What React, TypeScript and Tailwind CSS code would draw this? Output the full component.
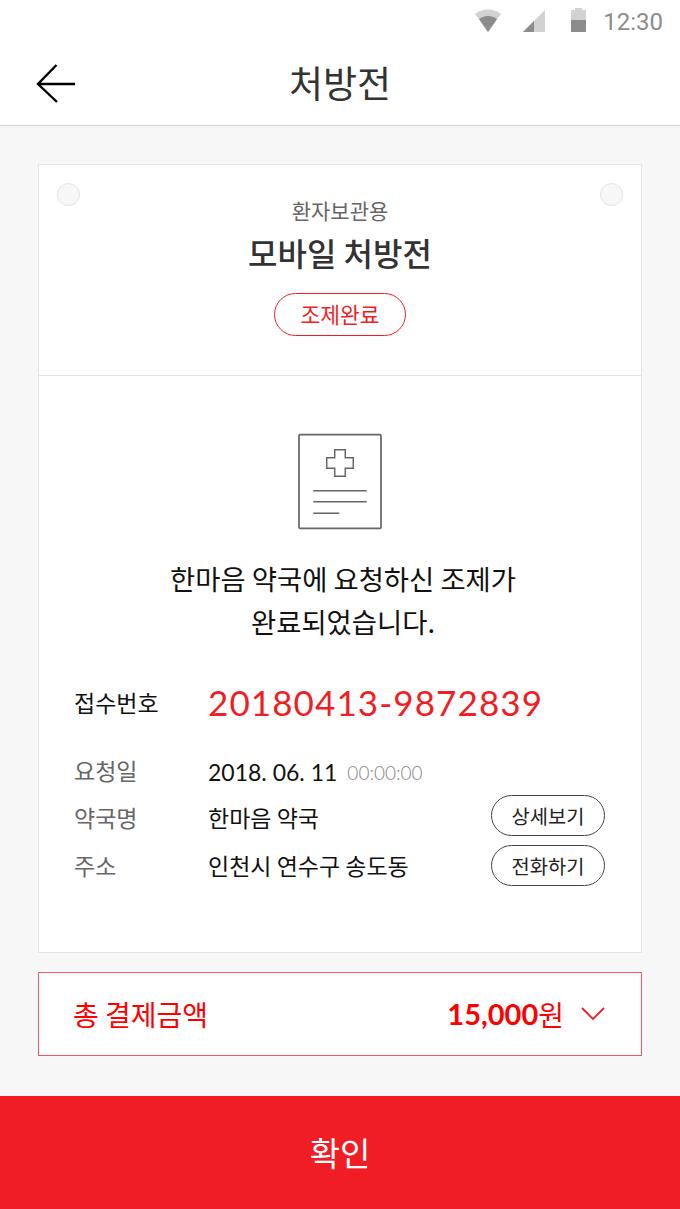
function StatusBar() {
    return (
        <div className="h-[44px] flex items-center justify-end pr-[17px] pb-[4px]">
            <svg width="28" height="24" viewBox="0 0 28 24" className="mr-[20px]">
                <path d="M1 6 C8 0 20 0 27 6 L14 24 Z" fill="#d2d2d2" />
                <path d="M5 11 C10 7 18 7 23 11 L14 24 Z" fill="#8c8c8c" />
            </svg>
            <svg width="24" height="24" viewBox="0 0 24 24" className="mr-[25px] mt-[2px]">
                <path d="M1 23 L23 1 V23 Z" fill="#d2d2d2" />
                <path d="M1 23 L12 12 V23 Z" fill="#8c8c8c" />
            </svg>
            <div className="w-[15px] h-[24px] mr-[17px] flex flex-col items-center">
                <div className="w-[7px] h-[2px] bg-[#d2d2d2]" />
                <div className="w-[15px] h-[10px] bg-[#d2d2d2]" />
                <div className="w-[15px] h-[12px] bg-[#8c8c8c]" />
            </div>
            <span className="mt-[4px] text-[24px] leading-none text-[#8c8c8c] font-['Roboto',sans-serif]">12:30</span>
        </div>
    );
}

function Header() {
    return (
        <div className="relative h-[82px] bg-white border-b border-[#cfcfcf] flex items-center justify-center">
            <button className="absolute left-[36px] top-[20px]">
                <svg width="40" height="40" viewBox="0 0 40 40" fill="none" stroke="#000" strokeWidth="2.4" className="block">
                    <path d="M39 20 H2 M20.5 1 L2 20 L21 38" />
                </svg>
            </button>
            <h1 className="text-[37px] leading-none text-[#333] mb-[4px]">처방전</h1>
        </div>
    );
}

function PrescriptionIcon() {
    return (
        <svg width="86" height="98" viewBox="0 0 86 98" fill="none" stroke="#666" strokeWidth="1.5" className="block">
            <rect x="2" y="2.7" width="82" height="93.6" rx="1" strokeWidth="1.7" />
            <path d="M37.7 17.7 H48.3 V25.7 H56.3 V36.3 H48.3 V44.3 H37.7 V36.3 H29.7 V25.7 H37.7 Z" />
            <path d="M16.3 58.7 H69.7 M16.3 69.7 H69.7 M16.3 81.3 H42.3" />
        </svg>
    );
}

function InfoRow({ label, children }: { label: string; children: React.ReactNode }) {
    return (
        <div className="flex items-center h-[47.5px]">
            <span className="w-[134px] text-[23px] text-[#666]">{label}</span>
            {children}
        </div>
    );
}

function PillButton({ children, className }: { children: React.ReactNode; className: string }) {
    return (
        <button className={`ml-auto w-[114px] h-[41px] rounded-full border border-[#444] bg-white text-[19.8px] text-[#222] flex items-center justify-center ${className}`}>
            {children}
        </button>
    );
}

export default function App() {
    return (
        <div className="w-[680px] h-[1209px] bg-[#f7f7f7] flex flex-col overflow-hidden font-['Noto_Sans_CJK_KR','Noto_Sans',sans-serif]">
            <div className="bg-white">
                <StatusBar />
                <Header />
            </div>

            <main className="flex-1 px-[38px] pt-[38px]">
                <section className="bg-white border border-[#e4e4e4] h-[789px]">
                    <div className="relative h-[211px] border-b border-[#e4e4e4] flex flex-col items-center pt-[30px]">
                        <span className="absolute left-[18px] top-[18px] w-[23px] h-[23px] rounded-full bg-[#f7f7f7] border border-[#e2e2e2]" />
                        <span className="absolute right-[18px] top-[18px] w-[23px] h-[23px] rounded-full bg-[#f7f7f7] border border-[#e2e2e2]" />
                        <p className="text-[21px] leading-[30px] text-[#666]">환자보관용</p>
                        <h2 className="text-[32px] leading-[46px] font-medium text-[#333] mt-[4px]">모바일 처방전</h2>
                        <span className="mt-[18px] w-[132px] h-[43px] rounded-full border border-[#f01d25] text-[#f01d25] text-[21.5px] flex items-center justify-center">조제완료</span>
                    </div>

                    <div className="flex flex-col items-center pt-[56px]">
                        <PrescriptionIcon />
                        <p className="mt-[27px] ml-[6px] text-[27.4px] leading-[43px] text-[#111] text-center">
                            한마음 약국에 요청하신 조제가
                            <br />
                            완료되었습니다.
                        </p>
                    </div>

                    <div className="px-[35px] mt-[33px] pr-[36px]">
                        <div className="flex items-center h-[52px]">
                            <span className="w-[134px] text-[23px] text-[#111]">접수번호</span>
                            <span className="text-[35px] leading-none tracking-[1.1px] text-[#f01d25] font-['Lato',sans-serif]">20180413-9872839</span>
                        </div>
                        <div className="mt-[18px]">
                            <InfoRow label="요청일">
                                <span className="mt-[4px] text-[23px] text-[#111] font-['Lato',sans-serif]">2018. 06. 11</span>
                                <span className="mt-[6px] ml-[10px] text-[19px] text-[#888] font-['Lato',sans-serif] font-light">00:00:00</span>
                            </InfoRow>
                            <InfoRow label="약국명">
                                <span className="text-[23px] text-[#111]">한마음 약국</span>
                                <PillButton className="mb-[3px]">상세보기</PillButton>
                            </InfoRow>
                            <InfoRow label="주소">
                                <span className="text-[23px] text-[#111]">인천시 연수구 송도동</span>
                                <PillButton className="mt-[2px]">전화하기</PillButton>
                            </InfoRow>
                        </div>
                    </div>
                </section>

                <button className="mt-[19px] w-full h-[84px] bg-white border border-[#ee5a60] flex items-center pl-[34px] pr-[36px] text-[#ff0000]">
                    <span className="text-[28px]">총 결제금액</span>
                    <span className="ml-auto text-[29px] font-bold font-['Lato',sans-serif]">15,000</span>
                    <span className="text-[28px]">원</span>
                    <svg width="24" height="14" viewBox="0 0 24 14" fill="none" stroke="#f01d25" strokeWidth="1.8" className="ml-[17px]">
                        <path d="M1 1 L12 12 L23 1" />
                    </svg>
                </button>
            </main>

            <button className="h-[113px] bg-[#f01d25] text-white text-[33px] flex items-center justify-center">확인</button>
        </div>
    );
}
